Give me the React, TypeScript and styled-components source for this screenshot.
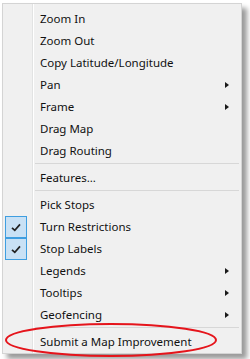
import React from 'react';
import styled, { createGlobalStyle } from 'styled-components';

const GlobalStyle = createGlobalStyle`
  html, body {
    margin: 0;
    padding: 0;
    background: #ffffff;
  }
  body {
    font-family: "Noto Sans", "Open Sans", sans-serif;
  }
`;

const Stage = styled.div`
  position: relative;
  width: 250px;
  height: 359px;
  padding: 3px 0 0 2px;
  box-sizing: border-box;
`;

const Menu = styled.div`
  width: 240px;
  box-sizing: border-box;
  border: 1px solid #d4d4d4;
  padding: 4px 0 0;
  display: flex;
  flex-direction: column;
  background: linear-gradient(
    to right,
    #f0f0f0 29px,
    #e2e3e3 29px,
    #e2e3e3 30px,
    #ffffff 30px,
    #ffffff 31px,
    #f0f0f0 31px
  );
  box-shadow: 5px 5px 5px rgba(0, 0, 0, 0.4);
`;

const Row = styled.div`
  height: 22px;
  display: grid;
  grid-template-columns: 37px 1fr 16px;
  align-items: center;
  font-size: 11.5px;
  color: #111;
`;

const CheckCell = styled.div<{ $checked?: boolean }>`
  width: 22px;
  height: 22px;
  margin-left: 2px;
  box-sizing: border-box;
  display: flex;
  align-items: center;
  justify-content: center;
  border: 1px solid ${(p) => (p.$checked ? '#3f9ee0' : 'transparent')};
  background: ${(p) => (p.$checked ? '#c9e1f5' : 'transparent')};
`;

const Label = styled.span`
  white-space: nowrap;
  line-height: 22px;
`;

const Arrow = styled.span`
  width: 0;
  height: 0;
  border-left: 4px solid #1a1a1a;
  border-top: 3.5px solid transparent;
  border-bottom: 3.5px solid transparent;
`;

const Separator = styled.div`
  height: 5px;
  padding-top: 1px;
  box-sizing: border-box;
  margin: 0 2px 0 32px;

  &::before {
    content: '';
    display: block;
    height: 1px;
    background: #d7d7d7;
  }
`;

const Ellipse = styled.svg`
  position: absolute;
  left: 0;
  top: 318px;
`;

type Entry = { label?: string; sub?: boolean; checked?: boolean; sep?: boolean };

const entries: Entry[] = [
  { label: 'Zoom In' },
  { label: 'Zoom Out' },
  { label: 'Copy Latitude/Longitude' },
  { label: 'Pan', sub: true },
  { label: 'Frame', sub: true },
  { label: 'Drag Map' },
  { label: 'Drag Routing' },
  { sep: true },
  { label: 'Features...' },
  { sep: true },
  { label: 'Pick Stops' },
  { label: 'Turn Restrictions', checked: true },
  { label: 'Stop Labels', checked: true },
  { label: 'Legends', sub: true },
  { label: 'Tooltips', sub: true },
  { label: 'Geofencing', sub: true },
  { sep: true },
  { label: 'Submit a Map Improvement' },
];

function Check() {
  return (
    <svg width="10" height="9" viewBox="0 0 10 9">
      <path d="M1 4.8 L3.8 7.4 L9 1.4" fill="none" stroke="#222" strokeWidth="1.7" />
    </svg>
  );
}

export default function App() {
  return (
    <>
      <GlobalStyle />
      <Stage>
        <Menu>
          {entries.map((e, i) =>
            e.sep ? (
              <Separator key={i} />
            ) : (
              <Row key={i}>
                <CheckCell $checked={e.checked}>{e.checked && <Check />}</CheckCell>
                <Label>{e.label}</Label>
                {e.sub ? <Arrow /> : <span />}
              </Row>
            )
          )}
        </Menu>
        <Ellipse width="222" height="40" viewBox="0 0 222 40">
          <ellipse cx="111" cy="22" rx="105" ry="16" fill="none" stroke="#e5141b" strokeWidth="2" />
        </Ellipse>
      </Stage>
    </>
  );
}
